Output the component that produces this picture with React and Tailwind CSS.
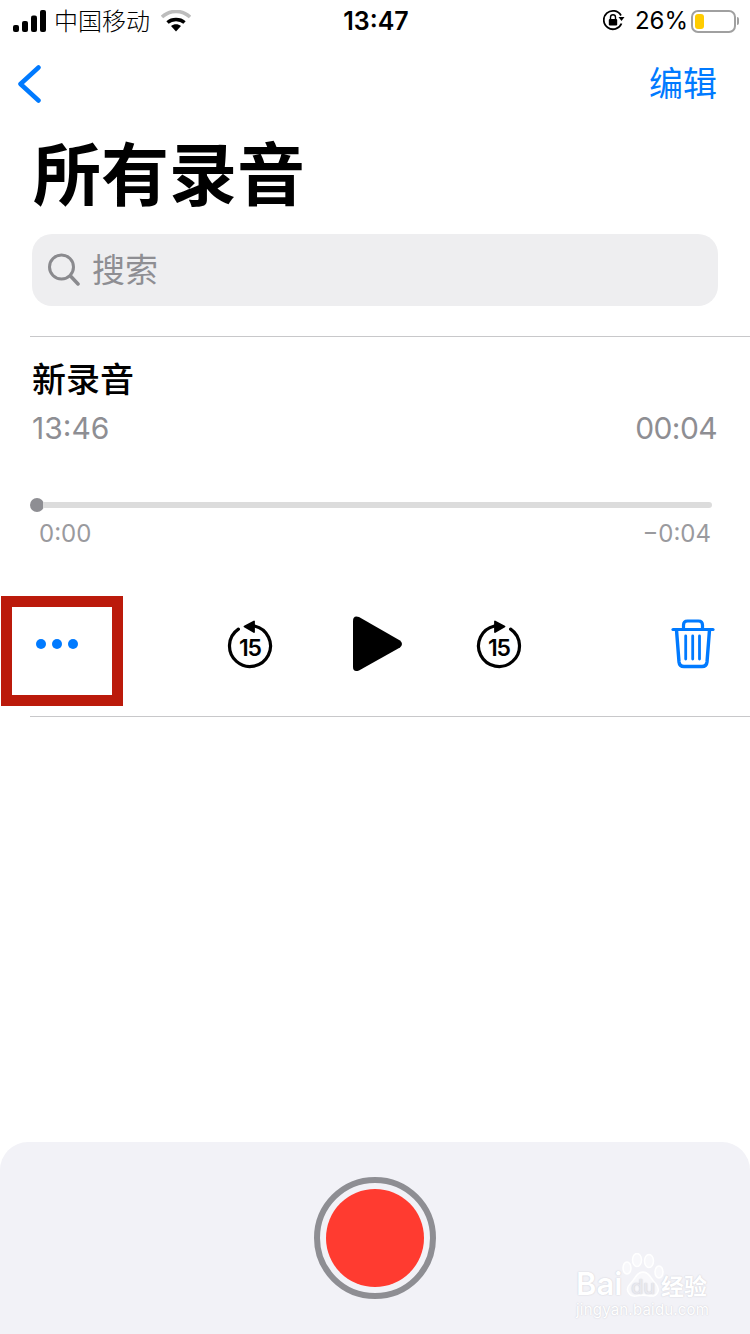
function Signal() {
  return (
    <svg width="34" height="22" viewBox="0 0 34 22">
      <rect x="0" y="15" width="6" height="7" rx="2" fill="#000" />
      <rect x="9" y="11" width="6" height="11" rx="2" fill="#000" />
      <rect x="18" y="5.500" width="6" height="16.500" rx="2" fill="#000" />
      <rect x="27" y="0" width="6" height="22" rx="2" fill="#000" />
    </svg>
  );
}
function Wifi() {
  return (
    <svg width="30" height="22" viewBox="0 0 30 22">
      <path d="M1 7 C9 -0.500 21 -0.500 29 7" fill="none" stroke="#bdbdbd" strokeWidth="3.500" />
      <path d="M6.500 12.500 C11 8.500 19 8.500 23.500 12.500" fill="none" stroke="#000" strokeWidth="3.500" />
      <path d="M10 16 C13 13.500 17 13.500 20 16 L15 21.500 Z" fill="#000" />
    </svg>
  );
}
function RotLock() {
  return (
    <svg width="22" height="22" viewBox="0 0 22 22">
      <path d="M18.500 14.500 A9.200 9.200 0 1 1 18 6.500" fill="none" stroke="#000" strokeWidth="1.800" />
      <path d="M15.500 8 L21.500 8 L18.500 12 Z" fill="#000" />
      <rect x="5.800" y="10" width="8.400" height="6.500" rx="1" fill="#000" />
      <path d="M7.500 10 V8.300 A2.500 2.500 0 0 1 12.500 8.300 V10" fill="none" stroke="#000" strokeWidth="1.400" />
    </svg>
  );
}
function Replay({ flip }) {
  return (
    <div className="relative w-[46px] h-[50px]">
      <svg width="46" height="50" viewBox="0 0 46 50" className={flip ? "-scale-x-100" : ""}>
        <path d="M27.500 6 A20.500 20.500 0 1 1 11.400 9.100" fill="none" stroke="#000" strokeWidth="3.200" strokeLinecap="round" />
        <path d="M27 1.500 L27 12 L17.500 6.500 Z" fill="#000" stroke="#000" strokeWidth="1.800" strokeLinejoin="round" />
      </svg>
      <span className="absolute left-0 right-0 top-[13px] text-center text-[23px] leading-[30px] font-semibold text-black tracking-[-1px] font-['Inter',sans-serif]">15</span>
    </div>
  );
}
function Trash() {
  return (
    <svg width="44" height="50" viewBox="0 0 44 50" fill="none" stroke="#007aff" strokeLinecap="round" strokeLinejoin="round">
      <path d="M2 10.500 H42" strokeWidth="3.200" />
      <path d="M12.500 10 V6 Q12.500 2 16.500 2 H27.500 Q31.500 2 31.500 6 V10" strokeWidth="3.200" />
      <path d="M5.500 11 L8 43 Q8.500 47.500 13 47.500 H31 Q35.500 47.500 36 43 L38.500 11" strokeWidth="3.400" />
      <path d="M14.700 17 V40 M21.700 17 V40 M28.500 17 V40" strokeWidth="2.800" />
    </svg>
  );
}
function Paw() {
  return (
    <svg width="42" height="44" viewBox="0 0 42 44" fill="none" stroke="#ffffff" strokeWidth="1.500">
      <ellipse cx="5" cy="15" rx="4" ry="6" fill="#f8f8fb" />
      <ellipse cx="15" cy="7" rx="4.500" ry="6.500" fill="#f8f8fb" />
      <ellipse cx="27" cy="8" rx="4.500" ry="6.500" fill="#f8f8fb" />
      <ellipse cx="37" cy="19" rx="4" ry="6" fill="#f8f8fb" />
      <path d="M21 19 C14 19 13 27 8 31 C2 37 8 44 14 43 C18 42 24 42 28 43 C35 44 39 37 34 31 C29 27 28 19 21 19 Z" fill="#f8f8fb" />
    </svg>
  );
}
export default function App() {
  return (
    <div className="relative w-[750px] h-[1334px] flex flex-col bg-white overflow-hidden font-['Inter','Noto_Sans_CJK_SC',sans-serif]">
      <div className="h-[42px] flex items-center justify-between pl-[13px] pr-[11px] text-black">
        <div className="w-[240px] flex items-center">
          <Signal />
          <span className="ml-[7px] -mt-[2px] text-[24px] leading-[32px] font-['Noto_Sans_CJK_SC',sans-serif] font-light">中国移动</span>
          <span className="ml-[11px]"><Wifi /></span>
        </div>
        <span className="text-[25px] leading-[32px] font-semibold">13:47</span>
        <div className="w-[240px] flex items-center justify-end">
          <span className="-mt-[2px]"><RotLock /></span>
          <span className="ml-[10px] text-[24px] leading-[32px]">26%</span>
          <div className="ml-[3px] w-[45px] h-[23px] rounded-[7px] border-2 border-[#a0a0a0] p-[2px] flex">
            <div className="w-[9px] rounded-[3px] bg-[#ffcc00]" />
          </div>
          <div className="ml-[1px] w-[2px] h-[8px] rounded-r bg-[#a0a0a0]" />
        </div>
      </div>
      <div className="h-[84px] flex items-center justify-between pl-[18px] pr-[33px]">
        <svg width="24" height="40" viewBox="0 0 24 40" fill="none" stroke="#007aff" strokeWidth="4.500" strokeLinecap="round" strokeLinejoin="round">
          <path d="M20.500 3.500 L2.500 20 L20.500 36.500" />
        </svg>
        <span className="-mt-[4px] text-[34px] leading-[40px] text-[#007aff] font-['Noto_Sans_CJK_SC',sans-serif] font-normal">编辑</span>
      </div>
      <div className="pl-[33px] pt-[8px] h-[82px] flex items-center">
        <span className="text-[68px] leading-[74px] font-bold text-black font-['Noto_Sans_CJK_SC',sans-serif]">所有录音</span>
      </div>
      <div className="mt-[26px] ml-[32px] w-[686px] h-[72px] rounded-[20px] bg-[#eeeef0] flex items-center pl-[16px]">
        <svg width="32" height="34" viewBox="0 0 32 34" fill="none" stroke="#8a8a8e" strokeLinecap="round">
          <circle cx="13.500" cy="14" r="12" strokeWidth="3" />
          <path d="M22.500 23 L30 31" strokeWidth="3.500" />
        </svg>
        <span className="ml-[12px] -mt-[4px] text-[33px] leading-[40px] text-[#8e8e93] font-['Noto_Sans_CJK_SC',sans-serif]">搜索</span>
      </div>
      <div className="mt-[30px] ml-[30px] h-px bg-[#c8c8ca]" />
      <div className="pl-[32px] pr-[33px] pt-[21px]">
        <div className="text-[34px] leading-[40px] font-medium text-black font-['Noto_Sans_CJK_SC',sans-serif]">新录音</div>
        <div className="mt-[10px] flex justify-between text-[30px] leading-[40px] text-[#8e8e93]">
          <span>13:46</span>
          <span className="tracking-[-0.6px]">00:04</span>
        </div>
      </div>
      <div className="mt-[50px] ml-[30px] w-[682px] flex items-center">
        <div className="w-[14px] h-[14px] rounded-full bg-[#8e8e93]" />
        <div className="flex-1 h-[6px] -ml-[1px] rounded-r-full bg-[#dcdcdc]" />
      </div>
      <div className="mt-[7px] pl-[39px] pr-[39px] flex justify-between text-[24px] leading-[30px] text-[#9a9a9e]">
        <span>0:00</span>
        <span>−0:04</span>
      </div>
      <div className="mt-[47px] h-[110px] flex items-start">
        <div className="ml-[1px] w-[122px] h-[110px] border-[11px] border-[#bb1a0b] flex items-center justify-center gap-[6px] pb-[14px] pr-[10px] box-border">
          <span className="w-[10px] h-[10px] rounded-full bg-[#007aff]" />
          <span className="w-[10px] h-[10px] rounded-full bg-[#007aff]" />
          <span className="w-[10px] h-[10px] rounded-full bg-[#007aff]" />
        </div>
        <div className="ml-[104px] mt-[24px]"><Replay /></div>
        <svg width="50" height="56" viewBox="0 0 50 56" className="ml-[80px] mt-[20px]">
          <path d="M0 5 Q0 -1 6 1 L47 24.500 Q51 28 47 31.500 L6 54.500 Q0 56.500 0 51 Z" fill="#000" />
        </svg>
        <div className="ml-[73px] mt-[24px]"><Replay flip /></div>
        <div className="ml-[149px] mt-[23px]"><Trash /></div>
      </div>
      <div className="mt-[10px] ml-[30px] h-px bg-[#c8c8ca]" />
      <div className="flex-1" />
      <div className="relative h-[192px] rounded-t-[28px] bg-[#f2f2f7] flex items-center justify-center">
        <div className="w-[122px] h-[122px] rounded-full border-[6px] border-[#8e8e93] flex items-center justify-center">
          <div className="w-[98px] h-[98px] rounded-full bg-[#ff3b30]" />
        </div>
        <div className="absolute left-[576px] top-[111px] w-[136px] h-[70px] [text-shadow:0_0_1.5px_#c4c4cc]">
          <span className="absolute left-0 top-[19px] text-[31px] leading-[24px] font-semibold text-white">Bai</span>
          <div className="absolute left-[46px] top-[0px]"><Paw /></div>
          <span className="absolute left-[55px] top-[25px] text-[20px] leading-[18px] font-medium text-[#e8e8ee]">du</span>
          <span className="absolute left-[85px] top-[20px] text-[23px] leading-[24px] font-semibold text-white font-['Noto_Sans_CJK_SC',sans-serif]">经验</span>
          <span className="absolute left-0 top-[48px] text-[15px] leading-[18px] tracking-[0.2px] text-white">jingyan.baidu.com</span>
        </div>
      </div>
    </div>
  );
}
